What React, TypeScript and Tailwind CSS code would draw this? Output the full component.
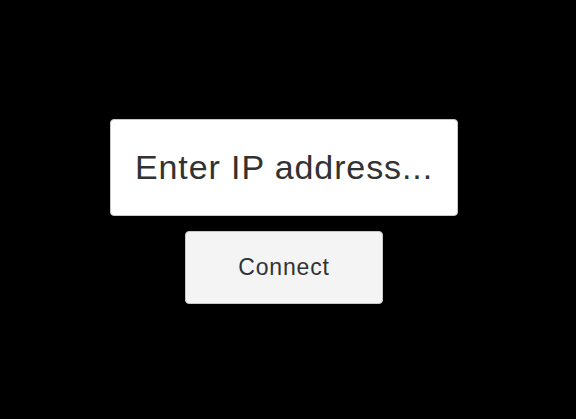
import React from "react";

export default function App() {
  return (
    <div className="w-[576px] h-[419px] bg-black flex flex-col items-center justify-center pr-[8px] pt-[3px] font-['Liberation_Sans',Arial,sans-serif]">
      <div className="w-[348px] h-[97px] bg-white border border-[#c8c8c8] rounded-[4px] flex items-center justify-center">
        <span className="text-[34px] leading-none tracking-[0.9px] text-[#323232]">Enter IP address...</span>
      </div>
      <button className="mt-[15px] w-[198px] h-[73px] bg-[#f4f4f4] border border-[#c8c8c8] rounded-[4px] flex items-center justify-center text-[23px] leading-none tracking-[0.8px] text-[#323232]">
        Connect
      </button>
    </div>
  );
}
